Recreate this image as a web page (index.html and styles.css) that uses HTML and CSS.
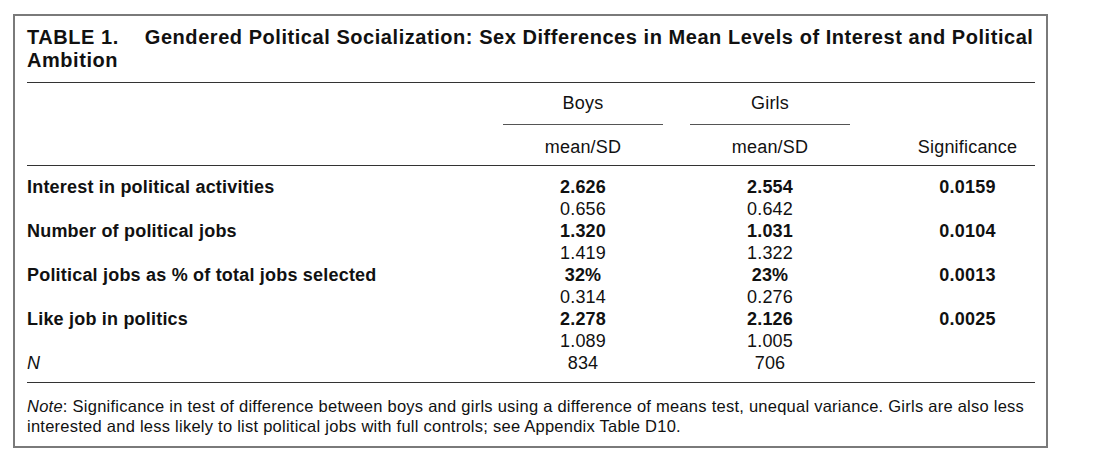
FILE: index.html
```html
<!DOCTYPE html>
<html>
<head>
<meta charset="utf-8">
<link rel="stylesheet" href="styles.css">
</head>
<body>
<div class="frame">
  <h1 class="title"><span class="tnum">TABLE 1.</span>Gendered Political Socialization: Sex Differences in Mean Levels of Interest and Political<br>Ambition</h1>
  <div class="rule"></div>
  <div class="grid head1">
    <div></div><div><div class="grp">Boys</div></div><div><div class="grp">Girls</div></div><div></div>
  </div>
  <div class="grid head2">
    <div></div><div class="c">mean/SD</div><div class="c">mean/SD</div><div class="c">Significance</div>
  </div>
  <div class="rule"></div>
  <div class="grid body">
    <div class="lbl">Interest in political activities</div><div class="c b">2.626</div><div class="c b">2.554</div><div class="c b">0.0159</div>
    <div></div><div class="c">0.656</div><div class="c">0.642</div><div></div>
    <div class="lbl">Number of political jobs</div><div class="c b">1.320</div><div class="c b">1.031</div><div class="c b">0.0104</div>
    <div></div><div class="c">1.419</div><div class="c">1.322</div><div></div>
    <div class="lbl">Political jobs as % of total jobs selected</div><div class="c b">32%</div><div class="c b">23%</div><div class="c b">0.0013</div>
    <div></div><div class="c">0.314</div><div class="c">0.276</div><div></div>
    <div class="lbl">Like job in politics</div><div class="c b">2.278</div><div class="c b">2.126</div><div class="c b">0.0025</div>
    <div></div><div class="c">1.089</div><div class="c">1.005</div><div></div>
    <div class="n">N</div><div class="c">834</div><div class="c">706</div><div></div>
  </div>
  <div class="rule"></div>
  <p class="note"><span class="line"><em>Note</em>: Significance in test of difference between boys and girls using a difference of means test, unequal variance. Girls are also less</span><br><span class="line">interested and less likely to list political jobs with full controls; see Appendix Table D10.</span></p>
</div>
</body>
</html>
```
FILE: styles.css
```css
html, body {
  margin: 0;
  padding: 0;
  background: #fff;
}
body {
  font-family: "Liberation Sans", Arial, sans-serif;
  color: #111;
}
.frame {
  box-sizing: border-box;
  margin: 14px 0 0 13px;
  width: 1035px;
  height: 434px;
  border: 2px solid #7a7a7a;
  padding: 10px 11px 0 12px;
}
.title {
  margin: 0 0 10px 0;
  font-size: 20px;
  line-height: 23px;
  letter-spacing: 0.55px;
  font-weight: bold;
  white-space: nowrap;
}
.tnum {
  margin-right: 26px;
}
.rule {
  height: 1px;
  background: #333;
}
.grid {
  display: grid;
  grid-template-columns: 476px 160px 187px 1fr;
  font-size: 18px;
  line-height: 22px;
  letter-spacing: 0.2px;
}
.grid > div {
  box-sizing: border-box;
}
.grid > div:nth-child(4n+3) {
  padding-left: 27px;
}
.grid > div:nth-child(4n+4) {
  padding-left: 50px;
  text-align: center;
}
.head1 {
  padding-top: 9px;
}
.grp {
  text-align: center;
  padding-bottom: 10px;
  border-bottom: 1px solid #555;
}
.head2 {
  padding-top: 11px;
  padding-bottom: 7px;
}
.c {
  text-align: center;
}
.b, .lbl {
  font-weight: bold;
}
.n {
  font-style: italic;
}
.body {
  padding-top: 10px;
  padding-bottom: 8px;
}
.note {
  margin: 13px 0 0 0;
  font-size: 16.5px;
  line-height: 20px;
  letter-spacing: 0.25px;
  white-space: nowrap;
}
```
